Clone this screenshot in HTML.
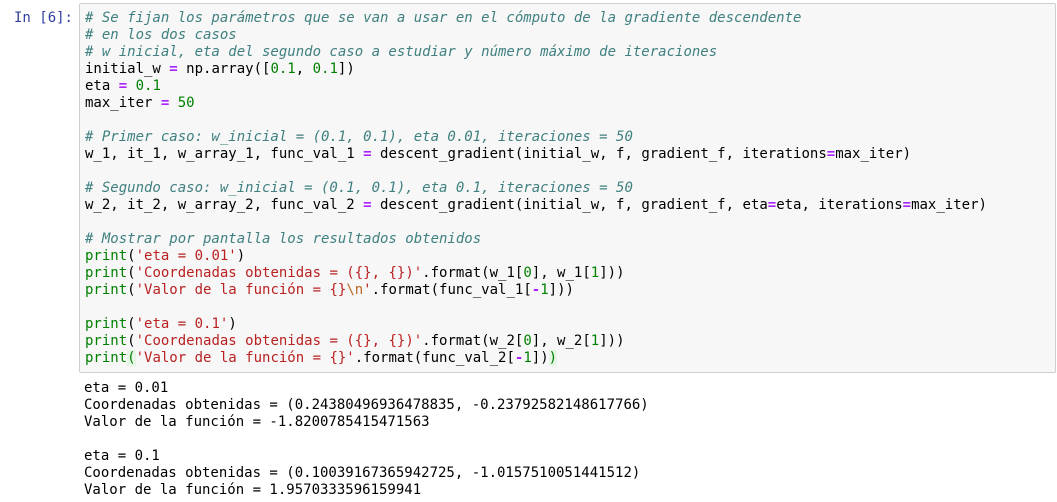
<!DOCTYPE html>
<html><head><meta charset="utf-8"><style>
body{margin:0;background:#fff;width:1057px;height:502px;overflow:hidden;font-family:"DejaVu Sans Mono","Liberation Mono",monospace;font-size:14px;}
.prompt{position:absolute;left:0;top:10px;width:73px;text-align:right;color:#303F9F;line-height:17px;}
.box{position:absolute;left:79px;top:3px;width:975px;height:368px;background:#f7f7f7;border:1px solid #cfcfcf;border-radius:2px;}
pre{margin:0;font:inherit;line-height:17px;white-space:pre;}
.code{position:absolute;left:85px;top:10px;color:#000;}
.out{position:absolute;left:84px;top:380px;color:#000;}
.c{color:#408080;font-style:italic}
.o{color:#AA22FF;font-weight:bold}
.n{color:#008000}
.b{color:#008000}
.s{color:#BA2121}
.e{color:#BB6622}
.m{color:#008000;background:#e6f5e6}
</style></head><body>
<div class="prompt">In [6]:</div>
<div class="box"></div>
<pre class="code"><span class="c"># Se fijan los parámetros que se van a usar en el cómputo de la gradiente descendente</span>
<span class="c"># en los dos casos</span>
<span class="c"># w inicial, eta del segundo caso a estudiar y número máximo de iteraciones</span>
initial_w <span class="o">=</span> np.array([<span class="n">0.1</span>, <span class="n">0.1</span>])
eta <span class="o">=</span> <span class="n">0.1</span>
max_iter <span class="o">=</span> <span class="n">50</span>

<span class="c"># Primer caso: w_inicial = (0.1, 0.1), eta 0.01, iteraciones = 50</span>
w_1, it_1, w_array_1, func_val_1 <span class="o">=</span> descent_gradient(initial_w, f, gradient_f, iterations<span class="o">=</span>max_iter)

<span class="c"># Segundo caso: w_inicial = (0.1, 0.1), eta 0.1, iteraciones = 50</span>
w_2, it_2, w_array_2, func_val_2 <span class="o">=</span> descent_gradient(initial_w, f, gradient_f, eta<span class="o">=</span>eta, iterations<span class="o">=</span>max_iter)

<span class="c"># Mostrar por pantalla los resultados obtenidos</span>
<span class="b">print</span>(<span class="s">'eta = 0.01'</span>)
<span class="b">print</span>(<span class="s">'Coordenadas obtenidas = ({}, {})'</span>.format(w_1[<span class="n">0</span>], w_1[<span class="n">1</span>]))
<span class="b">print</span>(<span class="s">'Valor de la función = {}</span><span class="e">\n</span><span class="s">'</span>.format(func_val_1[<span class="o">-</span><span class="n">1</span>]))

<span class="b">print</span>(<span class="s">'eta = 0.1'</span>)
<span class="b">print</span>(<span class="s">'Coordenadas obtenidas = ({}, {})'</span>.format(w_2[<span class="n">0</span>], w_2[<span class="n">1</span>]))
<span class="b">print</span><span class="m">(</span><span class="s">'Valor de la función = {}'</span>.format(func_val_2[<span class="o">-</span><span class="n">1</span>])<span class="m">)</span></pre>
<pre class="out">eta = 0.01
Coordenadas obtenidas = (0.24380496936478835, -0.23792582148617766)
Valor de la función = -1.8200785415471563

eta = 0.1
Coordenadas obtenidas = (0.10039167365942725, -1.0157510051441512)
Valor de la función = 1.9570333596159941</pre>
</body></html>
